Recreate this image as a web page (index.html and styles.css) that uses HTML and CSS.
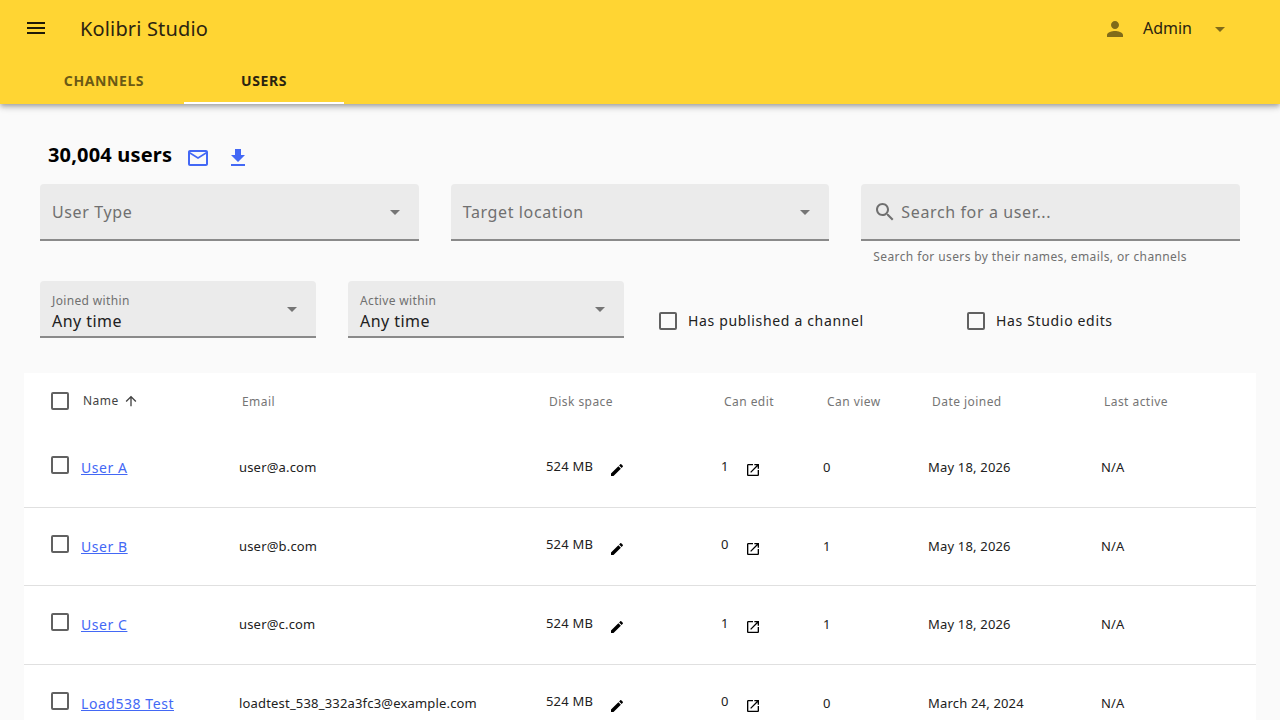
FILE: index.html
```html
<!DOCTYPE html>
<html lang="en">
<head>
<meta charset="utf-8">
<title>Kolibri Studio</title>
<link rel="stylesheet" href="styles.css">
</head>
<body>
<header class="appbar">
  <div class="toolbar">
    <svg class="menu-icon" viewBox="0 0 24 24"><path d="M3 18h18v-2H3v2zm0-5h18v-2H3v2zm0-7v2h18V6H3z"/></svg>
    <div class="app-title">Kolibri Studio</div>
    <div class="user-menu">
      <svg class="person-icon" viewBox="0 0 24 24"><path d="M12 12c2.21 0 4-1.79 4-4s-1.79-4-4-4-4 1.79-4 4 1.79 4 4 4zm0 2c-2.67 0-8 1.34-8 4v2h16v-2c0-2.66-5.33-4-8-4z"/></svg>
      <span class="user-name">Admin</span>
      <svg class="caret user-caret" viewBox="0 0 24 24"><path d="M7 10l5 5 5-5z"/></svg>
    </div>
  </div>
  <nav class="tabs">
    <a class="tab">CHANNELS</a>
    <a class="tab tab-active">USERS</a>
  </nav>
</header>
<main class="content">
  <div class="title-row">
    <h1 class="count">30,004 users</h1>
    <svg class="blue-icon mail-icon" viewBox="0 0 24 24"><path d="M20 4H4c-1.1 0-2 .9-2 2v12c0 1.100.9 2 2 2h16c1.100 0 2-.9 2-2V6c0-1.100-.9-2-2-2zm0 14H4V8l8 5 8-5v10zm-8-7L4 6h16l-8 5z"/></svg>
    <svg class="blue-icon dl-icon" viewBox="0 0 24 24"><path d="M19 9h-4V3H9v6H5l7 7 7-7zM5 18v2h14v-2H5z"/></svg>
  </div>
  <div class="filters-top">
    <div class="field field-tall">
      <span class="placeholder">User Type</span>
      <svg class="caret" viewBox="0 0 24 24"><path d="M7 10l5 5 5-5z"/></svg>
    </div>
    <div class="field field-tall">
      <span class="placeholder">Target location</span>
      <svg class="caret" viewBox="0 0 24 24"><path d="M7 10l5 5 5-5z"/></svg>
    </div>
    <div class="search-wrap">
      <div class="field field-tall field-search">
        <svg class="search-icon" viewBox="0 0 24 24"><path d="M15.500 14h-.79l-.28-.27C15.410 12.590 16 11.110 16 9.500 16 5.910 13.090 3 9.500 3S3 5.910 3 9.500 5.910 16 9.500 16c1.610 0 3.090-.59 4.230-1.570l.27.28v.79l5 4.990L20.490 19l-4.990-5zm-6 0C7.010 14 5 11.990 5 9.500S7.010 5 9.500 5 14 7.010 14 9.500 11.990 14 9.500 14z"/></svg>
        <span class="placeholder">Search for a user...</span>
      </div>
      <div class="hint">Search for users by their names, emails, or channels</div>
    </div>
  </div>
  <div class="filters-bottom">
    <div class="field field-short">
      <div class="field-text"><span class="mini-label">Joined within</span><span class="field-value">Any time</span></div>
      <svg class="caret" viewBox="0 0 24 24"><path d="M7 10l5 5 5-5z"/></svg>
    </div>
    <div class="field field-short">
      <div class="field-text"><span class="mini-label">Active within</span><span class="field-value">Any time</span></div>
      <svg class="caret" viewBox="0 0 24 24"><path d="M7 10l5 5 5-5z"/></svg>
    </div>
    <label class="check-filter"><span class="box"></span>Has published a channel</label>
    <label class="check-filter"><span class="box"></span>Has Studio edits</label>
  </div>
  <section class="table">
    <div class="row head">
      <div class="cell cell-first"><span class="box"></span><span class="name-head">Name</span>
        <svg class="sort-icon" viewBox="0 0 24 24"><path d="M4 12l1.410 1.410L11 7.830V20h2V7.830l5.580 5.590L20 12l-8-8-8 8z"/></svg></div>
      <div class="cell">Email</div>
      <div class="cell">Disk space</div>
      <div class="cell">Can edit</div>
      <div class="cell cell-nudge">Can view</div>
      <div class="cell cell-nudge">Date joined</div>
      <div class="cell">Last active</div>
    </div>
    <div class="row">
      <div class="cell cell-first"><span class="box box-up"></span><a class="user-link">User A</a></div>
      <div class="cell">user@a.com</div>
      <div class="cell"><span class="raised">524 MB</span><svg class="pen" viewBox="0 0 24 24"><path d="M3 17.250V21h3.750L17.810 9.940l-3.750-3.750L3 17.250zM20.710 7.040c.39-.39.39-1.020 0-1.410l-2.340-2.340c-.39-.39-1.020-.39-1.410 0l-1.830 1.830 3.750 3.750 1.830-1.830z"/></svg></div>
      <div class="cell"><span class="raised num">1</span><svg class="open" viewBox="0 0 24 24"><path d="M19 19H5V5h7V3H5c-1.110 0-2 .9-2 2v14c0 1.100.89 2 2 2h14c1.100 0 2-.9 2-2v-7h-2v7zM14 3v2h3.590l-9.830 9.830 1.410 1.410L19 6.410V10h2V3h-7z"/></svg></div>
      <div class="cell">0</div>
      <div class="cell">May 18, 2026</div>
      <div class="cell">N/A</div>
    </div>
    <div class="row">
      <div class="cell cell-first"><span class="box box-up"></span><a class="user-link">User B</a></div>
      <div class="cell">user@b.com</div>
      <div class="cell"><span class="raised">524 MB</span><svg class="pen" viewBox="0 0 24 24"><path d="M3 17.250V21h3.750L17.810 9.940l-3.750-3.750L3 17.250zM20.710 7.040c.39-.39.39-1.020 0-1.410l-2.340-2.340c-.39-.39-1.020-.39-1.410 0l-1.830 1.830 3.750 3.750 1.830-1.830z"/></svg></div>
      <div class="cell"><span class="raised num">0</span><svg class="open" viewBox="0 0 24 24"><path d="M19 19H5V5h7V3H5c-1.110 0-2 .9-2 2v14c0 1.100.89 2 2 2h14c1.100 0 2-.9 2-2v-7h-2v7zM14 3v2h3.590l-9.830 9.830 1.410 1.410L19 6.410V10h2V3h-7z"/></svg></div>
      <div class="cell">1</div>
      <div class="cell">May 18, 2026</div>
      <div class="cell">N/A</div>
    </div>
    <div class="row">
      <div class="cell cell-first"><span class="box box-up"></span><a class="user-link">User C</a></div>
      <div class="cell">user@c.com</div>
      <div class="cell"><span class="raised">524 MB</span><svg class="pen" viewBox="0 0 24 24"><path d="M3 17.250V21h3.750L17.810 9.940l-3.750-3.750L3 17.250zM20.710 7.040c.39-.39.39-1.020 0-1.410l-2.340-2.340c-.39-.39-1.020-.39-1.410 0l-1.830 1.830 3.750 3.750 1.830-1.830z"/></svg></div>
      <div class="cell"><span class="raised num">1</span><svg class="open" viewBox="0 0 24 24"><path d="M19 19H5V5h7V3H5c-1.110 0-2 .9-2 2v14c0 1.100.89 2 2 2h14c1.100 0 2-.9 2-2v-7h-2v7zM14 3v2h3.590l-9.830 9.830 1.410 1.410L19 6.410V10h2V3h-7z"/></svg></div>
      <div class="cell">1</div>
      <div class="cell">May 18, 2026</div>
      <div class="cell">N/A</div>
    </div>
    <div class="row">
      <div class="cell cell-first"><span class="box box-up"></span><a class="user-link">Load538 Test</a></div>
      <div class="cell">loadtest_538_332a3fc3@example.com</div>
      <div class="cell"><span class="raised">524 MB</span><svg class="pen" viewBox="0 0 24 24"><path d="M3 17.250V21h3.750L17.810 9.940l-3.750-3.750L3 17.250zM20.710 7.040c.39-.39.39-1.020 0-1.410l-2.340-2.340c-.39-.39-1.020-.39-1.410 0l-1.830 1.830 3.750 3.750 1.830-1.830z"/></svg></div>
      <div class="cell"><span class="raised num">0</span><svg class="open" viewBox="0 0 24 24"><path d="M19 19H5V5h7V3H5c-1.110 0-2 .9-2 2v14c0 1.100.89 2 2 2h14c1.100 0 2-.9 2-2v-7h-2v7zM14 3v2h3.590l-9.830 9.830 1.410 1.410L19 6.410V10h2V3h-7z"/></svg></div>
      <div class="cell">0</div>
      <div class="cell">March 24, 2024</div>
      <div class="cell">N/A</div>
    </div>
  </section>
</main>
</body>
</html>
```
FILE: styles.css
```css
* { box-sizing: border-box; }
html, body { margin: 0; height: 720px; overflow: hidden; }
body { background: #fafafa; font-family: "Noto Sans", sans-serif; color: #212121; }
svg { display: block; flex: none; }

.appbar { height: 104px; background: #ffd533; box-shadow: 0 2px 4px -1px rgba(0,0,0,.2), 0 4px 5px rgba(0,0,0,.14), 0 1px 10px rgba(0,0,0,.12); position: relative; }
.toolbar { height: 56px; display: flex; align-items: center; padding-left: 24px; padding-right: 48px; }
.menu-icon { width: 24px; height: 24px; fill: #1f1a08; }
.app-title { margin-left: 32px; font-size: 20px; letter-spacing: .15px; color: #2b2410; }
.user-menu { margin-left: auto; display: flex; align-items: center; }
.person-icon { width: 24px; height: 24px; fill: #806b19; margin-top: 2px; }
.user-name { margin-left: 16px; font-size: 16px; color: #2b2410; }
.caret { width: 24px; height: 24px; fill: #757575; }
.user-caret { fill: #806b19; margin-left: 16px; margin-top: 2px; }
.tabs { display: flex; height: 48px; padding-left: 24px; }
.tab { width: 160px; height: 48px; display: flex; align-items: center; justify-content: center; font-size: 14px; font-weight: 700; letter-spacing: .6px; color: #6b5a15; }
.tab-active { color: #2b2410; border-bottom: 2px solid #fff; padding-top: 2px; }

.content { padding: 0 24px; }
.title-row { display: flex; align-items: center; height: 80px; padding: 23px 0 1px 24px; }
.count { margin: 0; font-size: 20px; font-weight: 700; letter-spacing: .17px; color: #000; line-height: 54px; }
.blue-icon { width: 24px; height: 24px; fill: #4368f5; margin-top: 5px; }
.mail-icon { margin-left: 14px; }
.dl-icon { margin-left: 16px; }

.filters-top { display: grid; grid-template-columns: repeat(3, 1fr); gap: 32px; padding: 0 16px; }
.field { background: #ebebeb; border-bottom: 2px solid #8a8a8a; border-radius: 4px 4px 0 0; display: flex; align-items: center; }
.field-tall { height: 57px; padding: 0 12px; justify-content: space-between; }
.field-search { justify-content: flex-start; }
.placeholder { font-size: 16px; letter-spacing: .62px; color: #707070; }
.search-icon { width: 24px; height: 24px; fill: #707070; margin-right: 4px; }
.hint { font-size: 12px; letter-spacing: .39px; color: #707070; padding: 7px 12px 0; }

.filters-bottom { display: grid; grid-template-columns: repeat(4, 1fr); gap: 32px; padding: 0 16px; margin-top: 16px; }
.field-short { height: 57px; padding: 0 12px; justify-content: space-between; }
.field-text { display: flex; flex-direction: column; padding-top: 9px; }
.mini-label { font-size: 12px; letter-spacing: .35px; line-height: 16px; color: #707070; }
.field-value { font-size: 16px; letter-spacing: .45px; line-height: 24px; color: #212121; }
.check-filter { display: flex; align-items: center; font-size: 14px; letter-spacing: .66px; color: #212121; padding-top: 22px; }
.box { display: block; flex: none; width: 18px; height: 18px; border: 2px solid #616161; border-radius: 2px; }
.check-filter .box { margin: 0 11px 0 3px; }

.table { background: #fff; margin-top: 35px; }
.row { display: grid; grid-template-columns: 215px 307px 175px 102px 105px 173px 155px; height: 78.5px; padding-bottom: 1px; border-bottom: 1px solid #e0e0e0; font-size: 13px; letter-spacing: .18px; }
.head { height: 56px; padding-bottom: 0; border-bottom: 0; font-size: 12px; letter-spacing: .45px; color: #757575; }
.head .cell { padding-left: 3px; }
.head .cell-nudge { padding-left: 4px; }
.head .cell-first { padding-left: 27px; color: #424242; }
.cell { display: flex; align-items: center; }
.cell-first { padding-left: 27px; }
.box-up { margin-top: -4.500px; }
.user-link { margin-left: 12px; margin-top: 1px; font-size: 14px; letter-spacing: .55px; color: #4368f5; text-decoration: underline; }
.name-head { margin-left: 14px; margin-top: -1px; }
.sort-icon { width: 16px; height: 16px; fill: #424242; margin-left: 4px; }
.raised { margin-top: -3px; }
.pen { width: 16px; height: 16px; margin-left: 16px; margin-top: 5.500px; fill: #000; }
.num { width: 10px; }
.open { width: 16px; height: 16px; margin-left: 14px; margin-top: 5.500px; fill: #000; }
```
